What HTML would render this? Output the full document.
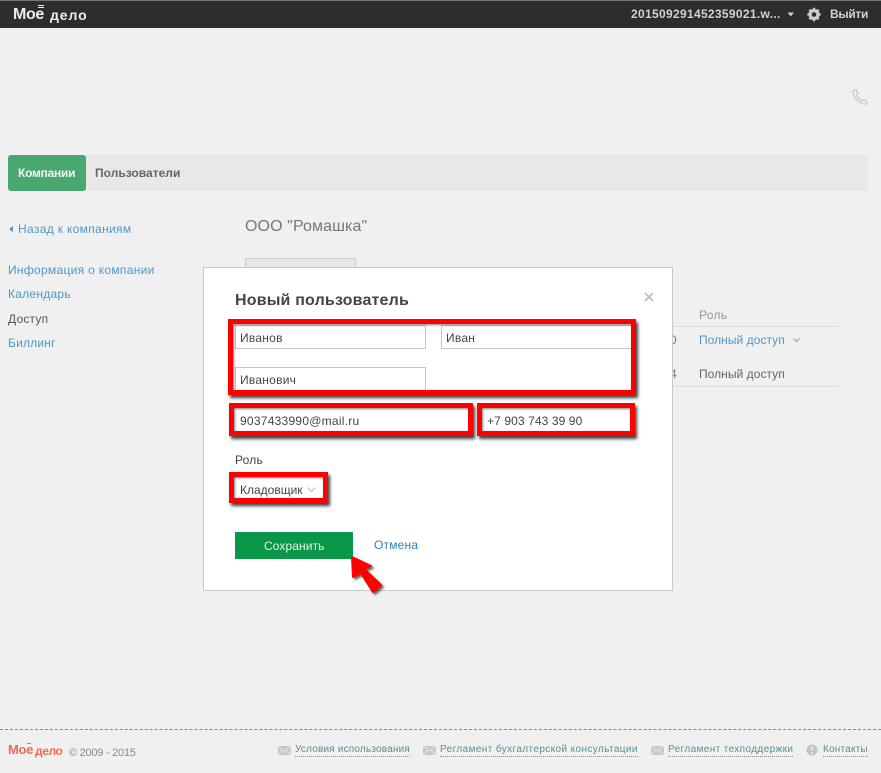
<!DOCTYPE html>
<html><head><meta charset="utf-8"><style>
html,body{margin:0;padding:0}
body{width:881px;height:773px;position:relative;overflow:hidden;background:#f0f0f0;font-family:"Liberation Sans",Arial,sans-serif;font-size:12px;color:#555}
.a{position:absolute;white-space:nowrap;line-height:14px}
.b{position:absolute;box-sizing:border-box}
.link{color:#4f97c6;letter-spacing:.3px}
.red{position:absolute;box-sizing:border-box;border:5px solid #f00;box-shadow:2px 3px 3px rgba(0,0,0,.75),inset 1px 1px 2px rgba(0,0,0,.5)}
.inp{position:absolute;box-sizing:border-box;background:#fff;border:1px solid #c6c6c6;padding:0 0 0 4px;line-height:24px;color:#444;letter-spacing:.25px;white-space:nowrap}
.f{position:absolute;white-space:nowrap;font-size:10px;line-height:12px;color:#5a8f94;border-bottom:1px dotted #888;top:744px}
</style></head><body>
<div class="b" style="left:0;top:0;width:881px;height:28px;background:#2d2d2d;border-top:1px solid #777"></div>
<div class="a" style="left:13px;top:6px;font-size:16px;line-height:18px;font-weight:bold;color:#eee;letter-spacing:-.35px">Мое</div>
<div class="b" style="left:38px;top:5px;width:6px;height:1px;background:#eee"></div>
<div class="b" style="left:38px;top:7px;width:6px;height:1px;background:#eee"></div>
<div class="a" style="left:50px;top:6px;font-size:14px;line-height:18px;font-weight:bold;color:#eee;letter-spacing:.9px">дело</div>
<div class="a" style="left:631px;top:7px;font-weight:bold;color:#d2d2d2;letter-spacing:.32px">201509291452359021.w...</div>
<svg class="b" style="left:787px;top:12px" width="8" height="5"><path d="M0.5 0.5H7L3.8 4.5Z" fill="#ccc"/></svg>
<svg class="b" style="left:806px;top:7px" width="16" height="15" viewBox="0 0 16 15"><circle cx="8" cy="7.5" r="4.2" fill="none" stroke="#ccc" stroke-width="2.8"/><path d="M8 .8V14.2M1.3 7.5H14.7M3.3 2.8L12.7 12.2M12.7 2.8L3.3 12.2" stroke="#ccc" stroke-width="2.2"/><circle cx="8" cy="7.5" r="2.3" fill="#2d2d2d"/></svg>
<div class="a" style="left:830px;top:7px;font-weight:bold;color:#d2d2d2;letter-spacing:-.3px">Выйти</div>
<svg class="b" style="left:852px;top:89px" width="16" height="16" viewBox="0 0 16 16"><path d="M2 1.2L4.2 .8 6 4.5 4.6 5.8C5.5 8.5 7.5 10.7 10 11.8L11.6 10.6 15 12.6 14.3 14.6C13 15.6 10.5 15.2 7.5 13 4 10.5 1.6 7 1 4 .8 2.8 1.2 1.8 2 1.2Z" fill="none" stroke="#b9bfc6" stroke-width="1"/></svg>

<div class="b" style="left:8px;top:155px;width:860px;height:36px;background:#e8e8e8"></div>
<div class="b" style="left:8px;top:155px;width:78px;height:36px;background:#49a86f;border-radius:3px"></div>
<div class="a" style="left:18px;top:166px;font-weight:bold;color:#f4f4f4;letter-spacing:-.25px">Компании</div>
<div class="a" style="left:95px;top:166px;font-weight:bold;color:#666;letter-spacing:.02px">Пользователи</div>

<svg class="b" style="left:9px;top:226px" width="4" height="6"><path d="M4 0V6L0 3Z" fill="#4f97c6"/></svg>
<div class="a link" style="left:18px;top:222px;letter-spacing:.33px">Назад к компаниям</div>
<div class="a link" style="left:8px;top:263px">Информация о компании</div>
<div class="a link" style="left:8px;top:287px;letter-spacing:.25px">Календарь</div>
<div class="a" style="left:8px;top:312px;color:#555;letter-spacing:.2px">Доступ</div>
<div class="a link" style="left:8px;top:336px;letter-spacing:.2px">Биллинг</div>

<div class="a" style="left:245px;top:217px;font-size:16px;line-height:19px;color:#777;letter-spacing:.1px">ООО "Ромашка"</div>
<div class="b" style="left:245px;top:258px;width:111px;height:12px;background:#e6e6e6;border:1px solid #ccc;border-radius:2px 2px 0 0"></div>

<div class="a" style="left:699px;top:308px;color:#999;letter-spacing:.3px">Роль</div>
<div class="b" style="left:673px;top:326px;width:166px;height:1px;background:#ddd"></div>
<div class="a" style="left:670px;top:333px;color:#777">0</div>
<div class="a" style="left:670px;top:367px;color:#777">4</div>
<div class="a link" style="left:699px;top:333px;letter-spacing:.05px">Полный доступ</div>
<svg class="b" style="left:793px;top:338px" width="7" height="5"><path d="M.5 .5L3.5 3.5 6.5 .5" fill="none" stroke="#6fa9d0" stroke-width="1"/></svg>
<div class="a" style="left:699px;top:367px;color:#666;letter-spacing:.05px">Полный доступ</div>
<div class="b" style="left:673px;top:386px;width:166px;height:1px;background:#ddd"></div>

<div class="b" style="left:203px;top:267px;width:470px;height:324px;background:#fff;border:1px solid #c8c8c8"></div>
<div class="a" style="left:235px;top:291px;font-size:16px;line-height:19px;font-weight:bold;color:#444;letter-spacing:.18px">Новый пользователь</div>
<svg class="b" style="left:644px;top:292px" width="10" height="10"><path d="M1 1L9 9M9 1L1 9" stroke="#bdbdbd" stroke-width="1.6"/></svg>

<div class="inp" style="left:235px;top:325px;width:191px;height:24px">Иванов</div>
<div class="inp" style="left:441px;top:325px;width:191px;height:24px">Иван</div>
<div class="inp" style="left:235px;top:367px;width:191px;height:24px">Иванович</div>
<div class="red" style="left:228px;top:319px;width:408px;height:76px"></div>

<div class="inp" style="left:235px;top:409px;width:233px;height:24px;border:none;padding-left:5px;line-height:25px;letter-spacing:.25px">9037433990@mail.ru</div>
<div class="red" style="left:229px;top:403px;width:244px;height:33px"></div>
<div class="inp" style="left:483px;top:409px;width:148px;height:22px;border:none;padding-left:4px;line-height:25px;letter-spacing:.1px">+7 903 743 39 90</div>
<div class="red" style="left:477px;top:403px;width:158px;height:33px"></div>

<div class="a" style="left:235px;top:453px;color:#444;letter-spacing:.2px">Роль</div>
<div class="a" style="left:240px;top:483px;color:#444;letter-spacing:0">Кладовщик</div>
<svg class="b" style="left:307px;top:487px" width="9" height="6"><path d="M.5 .5L4.5 4.5 8.5 .5" fill="none" stroke="#bbb" stroke-width="1"/></svg>
<div class="red" style="left:229px;top:472px;width:99px;height:31px"></div>

<div class="b" style="left:235px;top:532px;width:118px;height:27px;background:#0b9749"></div>
<div class="a" style="left:264px;top:539px;color:#e8f5ec;letter-spacing:.1px">Сохранить</div>
<div class="a" style="left:374px;top:538px;color:#2f81bd;letter-spacing:.2px">Отмена</div>
<svg class="b" style="left:345px;top:552px;overflow:visible" width="40" height="46" viewBox="0 0 40 46"><path d="M7 5L8 25 16 21 28 40 36 33 19 17 26 14Z" fill="#000" stroke="#000" stroke-width="2" stroke-linejoin="round" opacity=".6" transform="translate(2 2)" style="filter:blur(1px)"/><path d="M7 5L8 25 16 21 28 40 36 33 19 17 26 14Z" fill="#f00" stroke="#f00" stroke-width="2" stroke-linejoin="round"/></svg>

<div class="b" style="left:0;top:729px;width:881px;height:0;border-top:1px dashed #888"></div>
<div class="a" style="left:8px;top:743px;font-size:13px;font-weight:bold;color:#f4694f;letter-spacing:-.3px">Мое</div>
<div class="b" style="left:27px;top:743px;width:4px;height:1px;background:#f4694f"></div>
<div class="a" style="left:35px;top:744px;font-size:12px;font-weight:bold;color:#f4694f;letter-spacing:-.4px">дело</div>
<div class="a" style="left:69px;top:746px;font-size:11px;color:#888;letter-spacing:-.25px">© 2009 - 2015</div>
<svg class="b" style="left:278px;top:746px" width="13" height="9"><rect width="13" height="9" fill="#c8c8c8"/><path d="M0 0L6.5 5 13 0M0 9L5 4M13 9L8 4" stroke="#e4e4e4" fill="none"/></svg>
<div class="f" style="left:295px;letter-spacing:.19px">Условия использования</div>
<svg class="b" style="left:423px;top:746px" width="13" height="9"><rect width="13" height="9" fill="#c8c8c8"/><path d="M0 0L6.5 5 13 0M0 9L5 4M13 9L8 4" stroke="#e4e4e4" fill="none"/></svg>
<div class="f" style="left:440px;letter-spacing:.39px">Регламент бухгалтерской консультации</div>
<svg class="b" style="left:651px;top:746px" width="13" height="9"><rect width="13" height="9" fill="#c8c8c8"/><path d="M0 0L6.5 5 13 0M0 9L5 4M13 9L8 4" stroke="#e4e4e4" fill="none"/></svg>
<div class="f" style="left:668px;letter-spacing:.38px">Регламент техподдержки</div>
<svg class="b" style="left:806px;top:744px" width="12" height="12"><circle cx="6" cy="6" r="5.5" fill="#c4c4c4"/><path d="M6 2.5V6.5M6 8V9.5" stroke="#f0f0f0" stroke-width="1.6"/></svg>
<div class="f" style="left:823px;letter-spacing:.2px">Контакты</div>
</body></html>
